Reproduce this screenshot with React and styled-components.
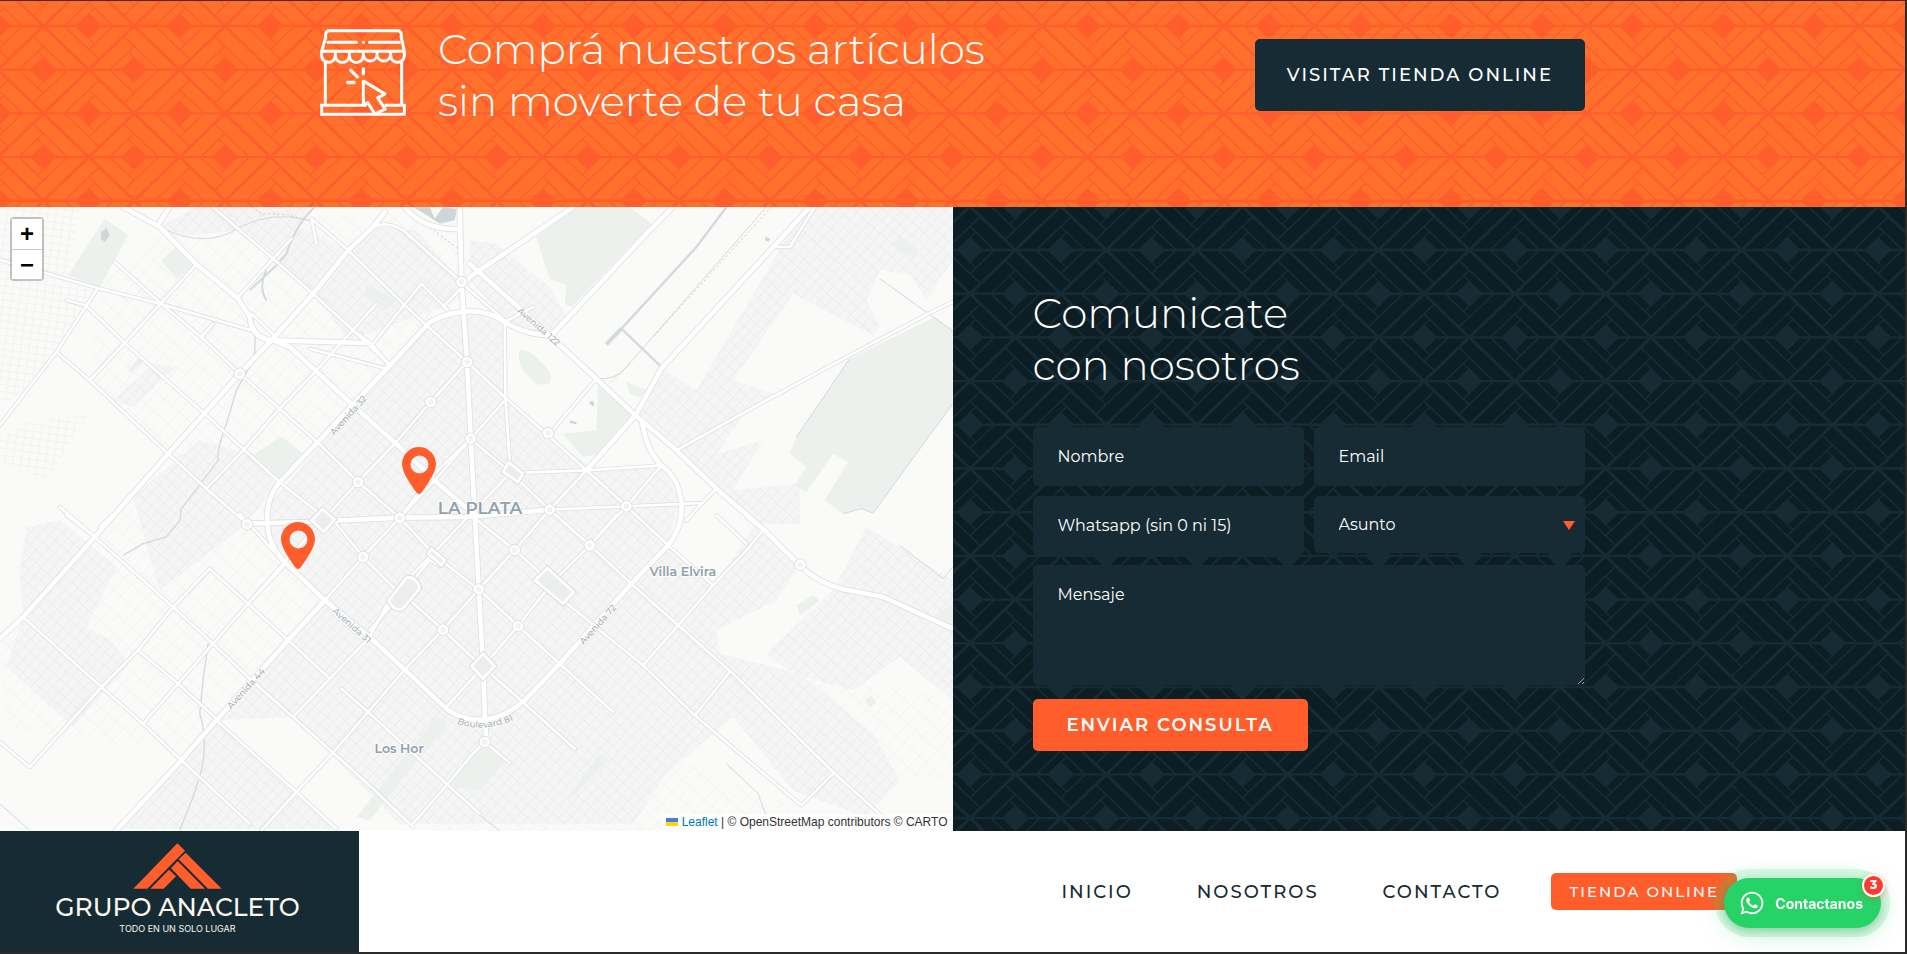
import styled, { createGlobalStyle } from "styled-components";
import { FaWhatsapp } from "react-icons/fa";

const colors = {
  primary: "#ff5e2c",
  primaryLight: "#ff702d",
  dark: "#162b33",
  darker: "#0d1d24",
};

const GlobalStyle = createGlobalStyle`
  * {
    box-sizing: border-box;
  }
  body {
    margin: 0;
    background-color: #ffffff;
    font-family: Montserrat, Inter, sans-serif;
  }
`;

/* ---------- woven background ---------- */

const TILE = { columns: 5, rows: 5, width: 454, height: 437 };

// bars of the lower right-handed half of a rhombus, as [right, left] distances
const BARS = [
  [[0.565, -0.51], [0.565, 0.955], [0.955, 0.955], [0.955, -0.9]],
  [[-0.51, 0.565], [0.51, 0.565], [0.51, 0.955], [-0.9, 0.955]],
  [[0.3, -0.245], [0.3, 0.515], [0.515, 0.515], [0.515, -0.46]],
  [[-0.245, 0.3], [0.26, 0.3], [0.26, 0.515], [-0.46, 0.515]],
];

function weave(lineColor, barColor) {
  const a = TILE.width / TILE.columns / 2;
  const b = TILE.height / TILE.rows / 2;
  let path = "";

  function rhombus(cx, cy, flipX) {
    [1, -1].forEach((flipY) => {
      BARS.forEach((bar) => {
        const points = bar.map(([r, l]) => {
          const x = cx + (flipX * a * (r - l)) / 2;
          const y = cy + (flipY * b * (r + l)) / 2;
          return x.toFixed(1) + " " + y.toFixed(1);
        });
        path += "M" + points.join("L") + "Z";
      });
    });
  }

  for (let row = 0; row <= TILE.rows * 2; row++) {
    for (let col = 0; col <= TILE.columns; col++) {
      const odd = row % 2;
      rhombus(a * 2 * col + (odd ? a : 0), b * row, odd ? 1 : -1);
    }
  }

  const svg = `<svg xmlns="http://www.w3.org/2000/svg" width="${TILE.width}" height="${TILE.height}"><rect width="100%" height="100%" fill="${lineColor}"/><path fill="${barColor}" d="${path}"/></svg>`;
  return `url("data:image/svg+xml,${encodeURIComponent(svg)}")`;
}

const orangeWeave = weave(colors.primary, colors.primaryLight);
const darkWeave = weave(colors.dark, colors.darker);

/* ---------- layout ---------- */

const Page = styled.div`
  border-top: 1px solid #4a2a20;
  border-right: 2px solid #2b2b2b;
  border-bottom: 2px solid #2b2b2b;
`;

const Banner = styled.section`
  padding: 22px 40px 80px;
  background-color: ${colors.primary};
  background-image: ${orangeWeave};
  background-position: -2px 25px;
`;

const BannerContent = styled.div`
  max-width: 1265px;
  margin: 0 auto;
  display: flex;
  justify-content: space-between;
`;

const BannerMessage = styled.div`
  display: flex;
  align-items: flex-start;
  gap: 32px;
`;

const StoreDrawing = styled.svg`
  width: 86px;
  height: 87px;
  margin-top: 6px;
`;

const Title = styled.h2`
  margin: 0;
  color: #ffffff;
  font-size: 42px;
  font-weight: 300;
  line-height: 52px;
`;

const StoreButton = styled.a`
  align-self: center;
  padding: 24px 32px;
  border-radius: 5px;
  background-color: ${colors.dark};
  color: #ffffff;
  font-size: 18px;
  font-weight: 500;
  line-height: 24px;
  letter-spacing: 2px;
  text-decoration: none;
`;

const Contact = styled.section`
  display: grid;
  grid-template-columns: 1fr 1fr;
`;

const MapArea = styled.div`
  position: relative;
  overflow: hidden;
  background-color: #fafaf8;
`;

const MapDrawing = styled.svg`
  position: absolute;
  inset: 0;
  width: 100%;
  height: 100%;
`;

const Pin = styled.svg`
  position: absolute;
  left: ${(props) => props.$left}px;
  top: ${(props) => props.$top}px;
  width: 34px;
  height: 47px;
`;

const ZoomControl = styled.div`
  position: absolute;
  left: 10px;
  top: 10px;
  display: flex;
  flex-direction: column;
  border: 2px solid rgba(0, 0, 0, 0.22);
  border-radius: 4px;
  background-clip: padding-box;
`;

const ZoomButton = styled.button`
  width: 30px;
  height: 30px;
  padding: 0;
  border: 0;
  background-color: #ffffff;
  color: #000000;
  font: bold 24px/30px "Liberation Sans", Arial, sans-serif;
  cursor: pointer;

  & + & {
    border-top: 1px solid #cccccc;
    line-height: 28px;
  }
`;

const Attribution = styled.div`
  position: absolute;
  right: 0;
  bottom: 0;
  padding: 0 5px;
  background-color: rgba(255, 255, 255, 0.8);
  color: #333333;
  font: 12px/17px "Liberation Sans", Arial, sans-serif;

  a {
    color: #0078a8;
    text-decoration: none;
  }
`;

const ContactPanel = styled.div`
  padding: 80px 0;
  background-color: ${colors.darker};
  background-image: ${darkWeave};
  background-position: 17px 43px;
`;

const ContactContent = styled.div`
  max-width: 632px;
  padding-left: 80px;
`;

const Form = styled.form`
  margin-top: 36px;
  display: grid;
  grid-template-columns: repeat(2, minmax(0, 1fr));
  align-items: start;
  gap: 10px;
`;

const fieldStyle = `
  display: block;
  width: 100%;
  border: 0;
  border-radius: 5px;
  background-color: ${colors.dark};
  color: #ffffff;
  font-family: inherit;
  font-size: 16px;
  font-weight: 400;
`;

const Input = styled.input`
  ${fieldStyle}
  height: 59px;
  padding: 0 25px;

  &::placeholder {
    color: #ffffff;
    opacity: 1;
  }
`;

const SelectWrapper = styled.div`
  position: relative;

  &::after {
    content: "";
    position: absolute;
    right: 10px;
    top: 25px;
    border-left: 6px solid transparent;
    border-right: 6px solid transparent;
    border-top: 9px solid ${colors.primary};
    pointer-events: none;
  }
`;

const Select = styled.select`
  ${fieldStyle}
  height: 57px;
  padding: 0 25px;
  appearance: none;
`;

const Message = styled.textarea`
  ${fieldStyle}
  grid-column: 1 / -1;
  height: 120px;
  padding: 20px 25px;
  resize: vertical;

  &::placeholder {
    color: #ffffff;
    opacity: 1;
  }
`;

const SubmitButton = styled.button`
  grid-column: 1 / -1;
  justify-self: start;
  height: 52px;
  margin-top: 4px;
  padding: 0 34px;
  border: 0;
  border-radius: 5px;
  background-color: ${colors.primary};
  color: #ffffff;
  font-family: inherit;
  font-size: 18px;
  font-weight: 600;
  letter-spacing: 2px;
  cursor: pointer;
`;

const Footer = styled.footer`
  display: flex;
  justify-content: space-between;
  background-color: #ffffff;
`;

const Brand = styled.a`
  width: 359px;
  height: 121px;
  padding: 12px 4px 0 0;
  display: flex;
  flex-direction: column;
  align-items: center;
  background-color: ${colors.dark};
  color: #fbf8ee;
  text-decoration: none;
`;

const BrandName = styled.span`
  margin-top: 4px;
  font-size: 25px;
  font-weight: 500;
  line-height: 28px;
`;

const BrandSlogan = styled.span`
  font-family: Inter, sans-serif;
  font-size: 9px;
  line-height: 16px;
`;

const Nav = styled.nav`
  padding-right: 168px;
  display: flex;
  align-items: center;
`;

const NavLink = styled.a`
  padding: 0 32px;
  color: ${colors.dark};
  font-size: 18px;
  font-weight: 500;
  letter-spacing: 2px;
  text-decoration: none;
`;

const NavButton = styled.a`
  margin-left: 18px;
  padding: 0 18px;
  border-radius: 5px;
  background-color: ${colors.primary};
  color: #ffffff;
  font-size: 15px;
  font-weight: 500;
  line-height: 37px;
  letter-spacing: 2px;
  text-decoration: none;
`;

const WhatsappButton = styled.a`
  position: fixed;
  right: 26px;
  bottom: 26px;
  height: 50px;
  padding: 0 18px 0 15px;
  display: flex;
  align-items: center;
  gap: 10px;
  border-radius: 25px;
  background-color: #25d366;
  box-shadow: 0 0 0 9px rgba(37, 211, 102, 0.16),
    0 4px 24px rgba(37, 211, 102, 0.35), 0 3px 8px rgba(0, 0, 0, 0.2);
  color: #ffffff;
  font-family: Inter, sans-serif;
  font-size: 14px;
  font-weight: 700;
  text-decoration: none;
`;

const WhatsappCount = styled.span`
  position: absolute;
  top: -4px;
  right: -4px;
  width: 23px;
  height: 23px;
  border: 2px solid #ffffff;
  border-radius: 50%;
  background-color: #ff3b30;
  box-shadow: 0 2px 6px rgba(255, 59, 48, 0.4);
  font-family: Montserrat, Inter, sans-serif;
  font-size: 12px;
  font-weight: 800;
  line-height: 18px;
  text-align: center;
`;

/* ---------- drawings ---------- */

function StoreIcon() {
  return (
    <StoreDrawing
      viewBox="60 89 258 260"
      fill="none"
      stroke="#ffffff"
      strokeWidth="9"
      strokeLinecap="round"
      strokeLinejoin="round"
    >
      <path d="M77 118V106Q77 94 89 94H292Q304 94 304 106V118" />
      <path d="M77 114L65 155V168A20 20 0 0 0 106 168V155M106 168A21 21 0 0 0 148 168V155M148 168A21 21 0 0 0 190 168V155M190 168A21 21 0 0 0 231 168V155M231 168A21 21 0 0 0 272 168V155M272 168A20 20 0 0 0 313 168V155L304 114M65 155H313" />
      <path d="M84 128H169M209 128H298M190 128h1" />
      <path d="M76 190V316M305 190V316" />
      <path
        strokeLinecap="butt"
        strokeLinejoin="miter"
        d="M200 317H65V344H313V317H254"
      />
      <path d="M190 245L255 283L233 295L256 329L224 343L203 309L190 317Z" />
      <path strokeWidth="10" d="M152 212L172 232M190 208V223M143 249H162" />
    </StoreDrawing>
  );
}

function BrandMark() {
  return (
    <svg width="89" height="46" viewBox="400 39 267 138" fill={colors.primary}>
      <path d="M533 40L556 62L443 176H401Z" />
      <path d="M558 68L666 176H625L537 88Z" />
      <path d="M534 93L616 176H573L514 115Z" />
      <path d="M508 119L529 139L492 176H452Z" />
    </svg>
  );
}

function MapPin({ left, top }) {
  return (
    <Pin $left={left} $top={top} viewBox="0 0 34 47">
      <path
        fill={colors.primary}
        fillRule="evenodd"
        d="M17 0C7.6 0 0 7.6 0 17C0 25 7 35 14 45Q17 49 20 45C27 35 34 25 34 17C34 7.600 26.400 0 17 0ZM17.500 8.500a9 9 0 1 1 0 18a9 9 0 1 1 0-18Z"
      />
    </Pin>
  );
}

const urbanAreas = [
  "M480 60L600 -6H930L900 60L830 150L730 70L560 85Z",
  "M900 60L1045 130L940 260L830 170Z",
  "M1120 60L1250 70L1385 225L1330 300L1045 400L940 260Z",
  "M1170 475L1290 345L1400 306L1515 345L1520 575L1660 700L1790 790L1985 775L2040 880L2005 1015L1575 1480L1456 1537L1345 1510L975 1180L815 1000L800 900Z",
  "M1410 100L1490 110L1650 240L1700 330L1640 385L1515 340L1410 220Z",
  "M1985 484L2090 550L2380 60L2450 0H2859V160L2780 280L2730 200L2640 190L2600 280L2640 360L2620 385L2380 260L2200 520L2320 560L2240 610L2150 740L2290 700L2200 850L2400 830L2400 950L2270 950L1907 625Z",
  "M2005 1015L2140 1135L2270 950L2400 1075L2330 1180L2150 1270L2160 1340L2400 1400L2620 1580L2700 1720L2600 1830L2380 1750L2200 1530L2000 1700L1900 1850H1200L880 1530L650 1540L870 1300L980 1175L1345 1510L1456 1537L1575 1480Z",
  "M2600 960L2859 1120V1480L2700 1350L2560 1450L2380 1400L2300 1340L2500 1150Z",
  "M650 1540L890 1755L1000 1865H360L545 1660Z",
  "M80 960L180 940L350 1080L260 1260L330 1300L390 1370L220 1560L20 1380L70 1230L60 1100Z",
  "M340 580L460 470L530 480L400 600Z",
  "M400 870L600 700L740 740L830 830L740 950L480 1150Z",
];

const greenAreas = [
  "M205 205L315 35L385 85L300 240Z",
  "M485 160L540 110L585 170L530 215Z",
  "M760 745L845 688L910 740L845 825Z",
  "M385 490L420 450L430 465L395 498Z",
  "M1100 235L1190 280L1160 310L1095 260Z",
  "M1610 90L1720 0H1890L1955 50L1715 300L1695 290L1700 235L1650 215L1620 125Z",
  "M1560 430Q1590 420 1650 495Q1665 545 1610 530Q1545 480 1560 430Z",
  "M1795 525L1907 625L1860 660L1800 740L1750 750L1690 680L1790 670Z",
  "M1880 525L1940 550L1920 570L1890 560Z",
  "M2675 110L2700 85L2760 130L2740 155Z",
  "M2859 370L2805 330L2550 455L2390 690L2370 740L2420 780L2385 835L2420 855L2500 740L2545 765L2475 880L2530 920L2585 905L2620 918L2859 590Z",
  "M2390 1195L2440 1165L2460 1180L2430 1205L2400 1225Z",
  "M2800 1230L2859 1190V1250Z",
  "M1400 1650L1450 1610L1515 1665L1440 1750L1340 1740Z",
  "M1310 1530L1345 1545L1110 1840L1070 1830Z",
  "M1410 1375L1450 1335L1480 1375L1450 1410Z",
  "M1700 1780L1800 1640L1825 1660L1740 1750Z",
  "M2595 1480L2615 1465L2630 1490L2610 1500Z",
];

const squares = [
  "M1167 1180L1220 1112Q1250 1105 1260 1145L1210 1205Q1180 1215 1167 1180Z",
  "M1643 1083L1605 1120L1690 1190L1722 1155Z",
  "M935 940L968 906L1005 938L972 975Z",
  "M1526 765L1570 800L1555 825L1510 795Z",
  "M1285 1040L1325 1075L1335 1060L1295 1025Z",
  "M1450 1340L1485 1377L1450 1415L1415 1377Z",
];

const minorRoads = [
  "M0 158L300 245L480 290L755 370",
  "M200 280L258 295L375 408L612 618L845 830L985 940",
  "M345 165L485 290L610 395L720 500L840 605L960 712L1075 825L1200 932",
  "M755 320L860 420M950 110L935 35L1045 130L1210 290L1280 355",
  "M290 250L170 435L0 655M170 435L270 520L505 740L625 850L742 950",
  "M590 172L375 408L270 520M875 95L715 270M1130 290L950 490L840 605L730 730L620 845M640 350L605 390",
  "M930 425L1160 485M1120 410L1265 230L1345 310M1410 215L1330 300",
  "M1060 370L1170 475M640 1L820 155L940 260L1060 370L1115 410L1170 475",
  "M1120 60Q1160 40 1210 70L1385 225L1410 250L1515 340",
  "M1402 465L1293 585L1187 708L1075 825L965 945L850 1070L745 1190L640 1310L535 1430L430 1550",
  "M1280 355L1402 465L1520 575L1640 680L1760 790L1880 898L2005 1015L2140 1135",
  "M1413 695L1293 810L1200 932M1760 790L1650 908L1545 1029L1437 1147L1330 1268L1215 1388L1105 1515L1000 1637L890 1755L785 1870",
  "M1985 775L1880 898L1770 1015L1655 1130L1555 1257L1440 1390L1340 1500",
  "M1413 695L1530 795L1650 908L1770 1015L1895 1130L2035 1255L2200 1400L2500 1695L2660 1840",
  "M1200 932L1310 1050L1437 1147L1555 1257L1680 1370L1840 1515",
  "M1005 945L1090 1050L1205 1165M1230 1180L1330 1268L1410 1345L1575 1490L1725 1625",
  "M1420 930L1545 1029L1640 1115M1690 1180L1800 1270L1930 1375L2085 1525L2250 1665L2405 1795L2500 1700",
  "M980 1175L1090 1050L1200 932L1310 815L1413 695L1520 575",
  "M1455 1605L1530 1668M1455 1605L1410 1650L1345 1730L1235 1855",
  "M200 924L285 990L520 1200L640 1310L755 1420L880 1530L1000 1637L1120 1745L1240 1860",
  "M70 1230L305 1440L430 1550L545 1660L750 1850M650 1540L890 1755L1010 1865",
  "M720 920L855 1070M630 1085L745 1190L865 1300L985 1410M630 1085L520 1200L415 1330L305 1440L90 1680L0 1605",
  "M390 875L300 960M180 900L280 985M415 1330L535 1430L655 1540M860 1070L745 1190",
  "M880 1530L1110 1290L1160 1195M1160 1200L1230 1110L1300 1040L1400 935L1530 800M1110 1270L1290 1060L1320 1075",
  "M1025 1445L1105 1515L1345 1735L1440 1820",
  "M1570 797L1760 790L1985 775M1650 908L1880 898L2110 888M1515 345L1517 575L1530 765M1650 680L1790 515",
  "M2150 845L2105 890L2060 940M2240 930L2290 970L2240 1030L2140 1135L2035 1255L1930 1375",
  "M2150 924L2240 1010M2190 1395L2085 1525",
  "M2445 0L2370 120H2320M1600 300L1515 345M1850 924L1770 1015",
];

const mainRoads = [
  "M370 0L480 60L590 172L715 275L750 330Q755 395 820 400L1095 408",
  "M480 45L510 0M820 400L870 420L945 488L1065 600L1187 708L1310 825L1425 924",
  "M0 1295L70 1230L285 990L505 740L615 618L720 500L820 395L940 260L1045 130L1120 60L1155 15",
  "M1215 0Q1270 70 1380 66",
  "M1380 0L1385 225L1402 465L1413 695L1425 924L1437 1147L1450 1375L1456 1537L1460 1605",
  "M1655 385Q1580 385 1515 345Q1420 280 1290 345L1170 475L950 710L840 825Q800 870 803 940Q800 1010 860 1070L975 1180L1110 1290L1215 1388L1345 1510Q1460 1580 1575 1480L1680 1370L1890 1135L2005 1015Q2050 960 2045 885Q2035 810 1985 775Q1940 730 1928 650",
  "M1410 170L1550 295L1790 515L1907 625L2030 730L2150 845L2290 965L2400 1075Q2450 1125 2530 1147L2650 1170L2859 1265",
  "M350 1870L545 1660L650 1540L865 1300L980 1175",
  "M2430 0L2330 110L1985 484L1907 625L1760 790",
  "M745 950L920 945L1200 932L1400 930L1650 908",
  "M2020 0L1950 70L1655 385M1720 0L1410 210",
];

const roundabouts = [
  [1385, 225],
  [1402, 465],
  [1293, 585],
  [1413, 695],
  [1075, 825],
  [1200, 932],
  [1090, 1050],
  [1650, 908],
  [1880, 898],
  [1437, 1147],
  [1545, 1029],
  [1770, 1015],
  [1555, 1257],
  [1330, 1268],
  [720, 500],
  [2402, 1073],
  [1455, 1605],
  [1645, 678],
  [742, 952],
];

const mapLabels = [
  { text: "LA PLATA", x: 1314, y: 922, size: 51, weight: 600 },
  { text: "Villa Elvira", x: 1949, y: 1107, size: 38, weight: 600 },
  { text: "Los Hor", x: 1124, y: 1638, size: 38, weight: 600 },
  { text: "Avenida 32", x: 1003, y: 686, size: 27, turn: -48 },
  { text: "Avenida 122", x: 1551, y: 314, size: 27, turn: 41 },
  { text: "Avenida 31", x: 997, y: 1214, size: 27, turn: 42 },
  { text: "Avenida 44", x: 694, y: 1508, size: 27, turn: -48 },
  { text: "Avenida 72", x: 1751, y: 1314, size: 27, turn: -48 },
];

function CityMap() {
  return (
    <MapDrawing viewBox="0 0 2859 1872" preserveAspectRatio="xMidYMid slice">
      <defs>
        <pattern
          id="blocks"
          width="24"
          height="30"
          patternUnits="userSpaceOnUse"
          patternTransform="rotate(42)"
        >
          <rect width="24" height="30" fill="#f5f5f5" />
          <path d="M0 0H24M0 0V30" stroke="#e6e8e8" strokeWidth="3" />
        </pattern>
        <pattern
          id="suburb"
          width="30"
          height="48"
          patternUnits="userSpaceOnUse"
          patternTransform="rotate(42)"
        >
          <path d="M0 0H30M0 0V48" stroke="#efefee" strokeWidth="3" />
        </pattern>
        <pattern
          id="west"
          width="24"
          height="21"
          patternUnits="userSpaceOnUse"
          patternTransform="rotate(8)"
        >
          <path d="M0 0H24M0 0V21" stroke="#ebeceb" strokeWidth="3" />
        </pattern>
      </defs>

      <rect width="2859" height="1872" fill="#fafaf8" />
      <path
        fill="url(#suburb)"
        d="M300 245L480 60L1400 0V300L800 900L985 1180L560 1640L20 1560L0 1300L500 740L270 520ZM1410 1540L1900 1600L2380 1800L2300 1872H1300ZM600 500L800 420L740 700ZM2300 1350L2859 1480V1720L2600 1700Z"
      />
      <path
        fill="url(#west)"
        d="M0 0H240L210 200L290 250L170 435L60 560L0 600ZM0 690L100 640L270 620L140 820L0 760Z"
      />
      <g fill="url(#blocks)">
        {urbanAreas.map((d) => (
          <path key={d} d={d} />
        ))}
      </g>
      <g fill="#ecf1ee">
        {greenAreas.map((d) => (
          <path key={d} d={d} />
        ))}
      </g>
      <g fill="#cfd6d9">
        <path d="M1240 0L1290 30L1320 50L1365 40L1372 5L1330 0L1305 35L1290 0Z" />
        <path d="M305 75L320 62L330 85L315 105L303 95ZM2298 90L2312 95L2306 104L2295 98ZM1768 588a8 8 0 1 1 10 10ZM1710 640L1730 645V652L1710 648Z" />
      </g>

      <g fill="none" stroke="#d3dadd" strokeWidth="6">
        <path d="M945 0Q890 50 860 140L830 175L750 250M800 190Q775 240 800 280" />
        <path
          d="M755 320Q775 400 760 460L710 550L680 650Q650 730 655 760L610 820L545 905L540 940L500 990L430 1010L370 1045"
          strokeWidth="4"
        />
        <path
          d="M625 1310L610 1420L600 1520Q625 1600 605 1690L580 1770L540 1870"
          strokeWidth="4"
        />
        <path d="M2180 0L2090 120L1865 365L1985 480" strokeWidth="7" />
        <path d="M1865 365L1820 412" strokeWidth="12" />
        <path
          d="M2640 215L2859 372M2550 455L2390 690M2620 918L2859 590M2530 920L2585 905L2620 918M2700 1015L2830 1115L2859 1080M2180 1670L2275 1760L2300 1830"
          strokeWidth="3"
        />
        <path
          d="M0 1790L90 1870M1410 1800L1500 1872M480 60Q620 130 720 60Q820 10 930 40L980 70M1790 515Q1850 520 1880 480L2300 0"
          strokeWidth="3"
        />
      </g>
      <g fill="none" stroke="#e3c8c8" strokeWidth="3" strokeDasharray="7 7">
        <path d="M755 0L790 22Q850 15 920 40M1290 60L1380 130M2315 0L1960 390M1890 470L1830 530" />
      </g>

      <g fill="none" strokeLinejoin="round" strokeLinecap="round">
        <g stroke="#dfe1e1" strokeWidth="13">
          {minorRoads.map((d) => (
            <path key={d} d={d} />
          ))}
          <path d="M2859 285L2790 318L2550 445L2290 585L2030 730" />
        </g>
        <g stroke="#dfe1e1" strokeWidth="19">
          {mainRoads.map((d) => (
            <path key={d} d={d} />
          ))}
        </g>
        <g stroke="#ffffff" strokeWidth="8">
          {minorRoads.map((d) => (
            <path key={d} d={d} />
          ))}
          <path d="M2859 285L2790 318L2550 445L2290 585L2030 730" />
        </g>
        <g stroke="#ffffff" strokeWidth="14">
          {mainRoads.map((d) => (
            <path key={d} d={d} />
          ))}
        </g>
      </g>

      <g fill="#e9edeb" stroke="#dcdedf" strokeWidth="14">
        {squares.map((d) => (
          <path key={d} d={d} />
        ))}
      </g>
      <g fill="#ebeeec" stroke="#ffffff" strokeWidth="8">
        {squares.map((d) => (
          <path key={d} d={d} />
        ))}
      </g>
      {roundabouts.map(([x, y]) => (
        <g key={x + "-" + y} fill="#f1f2f2">
          <circle cx={x} cy={y} r="12" stroke="#dcdedf" strokeWidth="13" />
          <circle cx={x} cy={y} r="12" stroke="#ffffff" strokeWidth="8" />
        </g>
      ))}

      <g
        stroke="#ffffff"
        strokeOpacity="0.7"
        strokeWidth="6"
        strokeLinejoin="round"
        paintOrder="stroke"
      >
        {mapLabels.map((label) => (
          <text
            key={label.text}
            x={label.x}
            y={label.y}
            fontSize={label.size}
            fontWeight={label.weight || 500}
            fill={label.turn ? "#a9b1b8" : "#93a0ac"}
            transform={
              label.turn && `rotate(${label.turn} ${label.x} ${label.y})`
            }
          >
            {label.text}
          </text>
        ))}
        <path
          id="boulevard"
          fill="none"
          stroke="none"
          d="M1372 1550Q1455 1580 1550 1536"
        />
        <text fontSize="27" fontWeight="500" fill="#a9b1b8">
          <textPath href="#boulevard">Boulevard 81</textPath>
        </text>
      </g>
    </MapDrawing>
  );
}

function UkraineFlag() {
  return (
    <svg width="12" height="8" viewBox="0 0 12 8" aria-hidden="true">
      <path fill="#4c7be1" d="M0 0h12v4H0z" />
      <path fill="#ffd500" d="M0 4h12v4H0z" />
    </svg>
  );
}

/* ---------- page ---------- */

export default function App() {
  const menu = ["INICIO", "NOSOTROS", "CONTACTO"];

  return (
    <>
      <GlobalStyle />
      <Page>
        <Banner>
          <BannerContent>
            <BannerMessage>
              <StoreIcon />
              <Title>
                Comprá nuestros artículos
                <br />
                sin moverte de tu casa
              </Title>
            </BannerMessage>
            <StoreButton href="#tienda">VISITAR TIENDA ONLINE</StoreButton>
          </BannerContent>
        </Banner>

        <Contact>
          <MapArea>
            <CityMap />
            <MapPin left={402} top={240} />
            <MapPin left={281} top={315} />
            <ZoomControl>
              <ZoomButton type="button" aria-label="Acercar">
                +
              </ZoomButton>
              <ZoomButton type="button" aria-label="Alejar">
                −
              </ZoomButton>
            </ZoomControl>
            <Attribution>
              <a href="#leaflet">
                <UkraineFlag /> Leaflet
              </a>{" "}
              | © OpenStreetMap contributors © CARTO
            </Attribution>
          </MapArea>

          <ContactPanel>
            <ContactContent>
              <Title>
                Comunicate
                <br />
                con nosotros
              </Title>
              <Form onSubmit={(e) => e.preventDefault()}>
                <Input type="text" placeholder="Nombre" aria-label="Nombre" />
                <Input type="email" placeholder="Email" aria-label="Email" />
                <Input
                  type="tel"
                  placeholder="Whatsapp (sin 0 ni 15)"
                  aria-label="Whatsapp (sin 0 ni 15)"
                />
                <SelectWrapper>
                  <Select aria-label="Asunto" defaultValue="">
                    <option value="">Asunto</option>
                  </Select>
                </SelectWrapper>
                <Message placeholder="Mensaje" aria-label="Mensaje" />
                <SubmitButton type="submit">ENVIAR CONSULTA</SubmitButton>
              </Form>
            </ContactContent>
          </ContactPanel>
        </Contact>

        <Footer>
          <Brand href="#inicio">
            <BrandMark />
            <BrandName>GRUPO ANACLETO</BrandName>
            <BrandSlogan>TODO EN UN SOLO LUGAR</BrandSlogan>
          </Brand>
          <Nav>
            {menu.map((item) => (
              <NavLink key={item} href={"#" + item.toLowerCase()}>
                {item}
              </NavLink>
            ))}
            <NavButton href="#tienda">TIENDA ONLINE</NavButton>
          </Nav>
        </Footer>
      </Page>

      <WhatsappButton href="#whatsapp">
        <FaWhatsapp size={26} />
        Contactanos
        <WhatsappCount>3</WhatsappCount>
      </WhatsappButton>
    </>
  );
}
